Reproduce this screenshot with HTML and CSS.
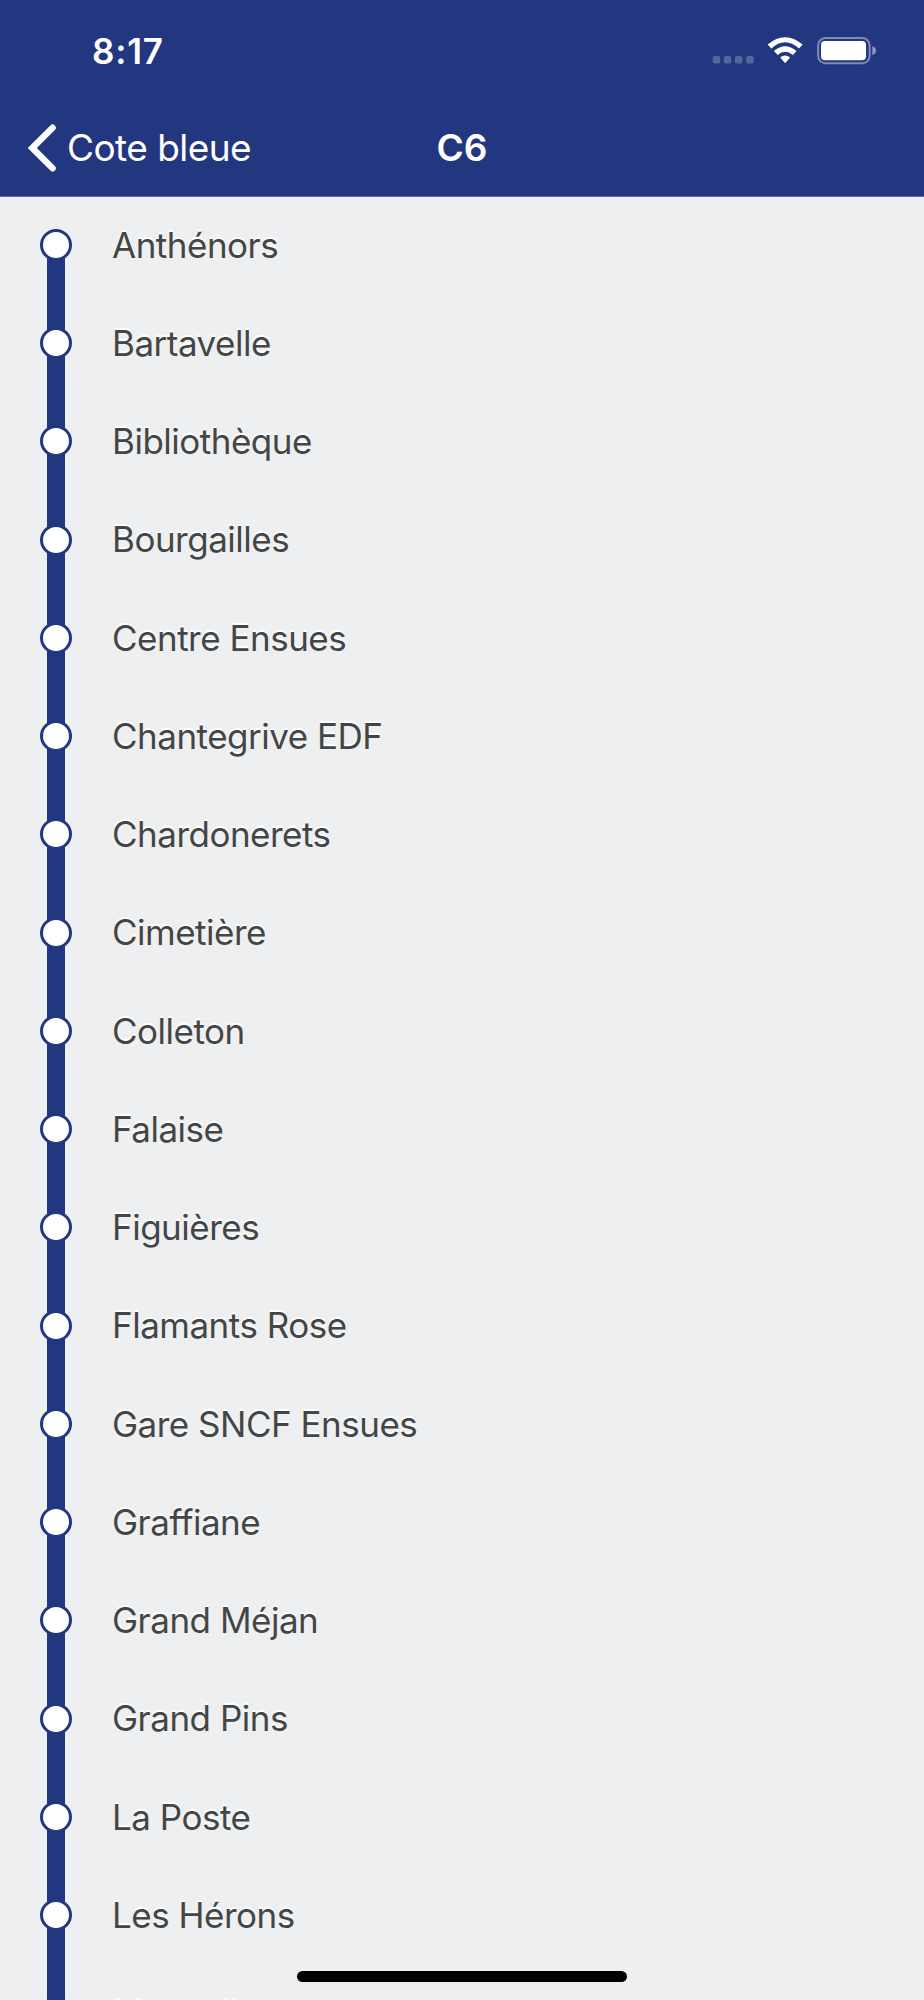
FILE: index.html
```html
<!DOCTYPE html>
<html lang="fr">
<head>
<meta charset="utf-8">
<title>C6</title>
<link rel="stylesheet" href="styles.css">
</head>
<body>
<div class="screen">
  <header class="header">
    <div class="status">
      <span class="time">8:17</span>
      <svg class="status-icons" width="168" height="30" viewBox="0 0 168 30" aria-hidden="true">
        <g fill="#fff" fill-opacity=".23">
          <rect x="0.7" y="19" width="7.5" height="7.6" rx="2"/>
          <rect x="11.8" y="19" width="7.5" height="7.6" rx="2"/>
          <rect x="22.9" y="19" width="7.5" height="7.6" rx="2"/>
          <rect x="34.2" y="19" width="7.5" height="7.6" rx="2"/>
        </g>
        <g fill="#fff">
          <path d="M55.6 7.6Q73 -7.2 90.7 7.6L87 11.5Q73 -.8 59.4 11.5Z"/>
          <path d="M61.9 14.1Q73 4.3 84.6 14.1L80.9 18Q73 11.4 65.7 18Z"/>
          <path d="M68.2 20.6Q73 16.6 78.1 20.6L73.2 26.2Z"/>
        </g>
        <rect x="106.1" y="1" width="51.6" height="25.3" rx="7.5" fill="none" stroke="#fff" stroke-opacity=".42" stroke-width="2"/>
        <rect x="109" y="4" width="45" height="19.2" rx="4" fill="#fff"/>
        <path d="M160.4 9.3Q164 10.6 164 13.6Q164 16.7 160.4 18Z" fill="#fff" fill-opacity=".5"/>
      </svg>
    </div>
    <nav class="nav">
      <a class="back">
        <svg width="28" height="48" viewBox="0 0 28 48" aria-hidden="true"><path d="M24.6 3.7L4.3 24L24.6 44.3" fill="none" stroke="#fff" stroke-width="6.4" stroke-linecap="round"/></svg>
        <span>Cote bleue</span>
      </a>
      <h1 class="title">C6</h1>
    </nav>
  </header>
  <ul class="stops">
    <li class="stop first"><span class="dot"></span><span class="name">Anthénors</span></li>
    <li class="stop"><span class="dot"></span><span class="name">Bartavelle</span></li>
    <li class="stop"><span class="dot"></span><span class="name">Bibliothèque</span></li>
    <li class="stop"><span class="dot"></span><span class="name">Bourgailles</span></li>
    <li class="stop"><span class="dot"></span><span class="name">Centre Ensues</span></li>
    <li class="stop"><span class="dot"></span><span class="name">Chantegrive EDF</span></li>
    <li class="stop"><span class="dot"></span><span class="name">Chardonerets</span></li>
    <li class="stop"><span class="dot"></span><span class="name">Cimetière</span></li>
    <li class="stop"><span class="dot"></span><span class="name">Colleton</span></li>
    <li class="stop"><span class="dot"></span><span class="name">Falaise</span></li>
    <li class="stop"><span class="dot"></span><span class="name">Figuières</span></li>
    <li class="stop"><span class="dot"></span><span class="name">Flamants Rose</span></li>
    <li class="stop"><span class="dot"></span><span class="name">Gare SNCF Ensues</span></li>
    <li class="stop"><span class="dot"></span><span class="name">Graffiane</span></li>
    <li class="stop"><span class="dot"></span><span class="name">Grand Méjan</span></li>
    <li class="stop"><span class="dot"></span><span class="name">Grand Pins</span></li>
    <li class="stop"><span class="dot"></span><span class="name">La Poste</span></li>
    <li class="stop"><span class="dot"></span><span class="name">Les Hérons</span></li>
    <li class="stop"><span class="dot"></span><span class="name">Mouvelle</span></li>
  </ul>
  <div class="home-indicator"></div>
</div>
</body>
</html>
```
FILE: styles.css
```css
* { box-sizing: border-box; }
body { margin: 0; }
.screen {
  position: relative;
  width: 924px;
  height: 2000px;
  overflow: hidden;
  background: #eeeff1;
  font-family: Inter, "Liberation Sans", sans-serif;
}
.header {
  height: 197px;
  background: #233780;
  border-bottom: 1px solid #5d6b9f;
  color: #fff;
}
.status {
  display: flex;
  justify-content: space-between;
  align-items: center;
  height: 99px;
  padding: 2px 44px 0 92px;
}
.status-icons {
  margin-top: 2px;
}
.time {
  font-size: 35px;
  font-weight: 600;
  letter-spacing: 0.8px;
}
.nav {
  display: grid;
  grid-template-columns: 1fr auto 1fr;
  align-items: center;
  height: 97px;
  padding: 0 28px;
}
.back {
  display: flex;
  align-items: center;
  gap: 11px;
  font-size: 37px;
  letter-spacing: -0.55px;
}
.title {
  margin: 0;
  font-size: 37px;
  font-weight: 600;
}
.stops {
  margin: 0;
  padding: 0;
  list-style: none;
}
.stop {
  display: flex;
  align-items: center;
  height: 98.25px;
  padding-left: 40px;
  gap: 40px;
  background: linear-gradient(#233780, #233780) 47px 0 / 18px 100% no-repeat;
}
.first {
  background-position: 47px 48px;
}
.dot {
  width: 32px;
  height: 32px;
  margin-top: -2.5px;
  border: 3px solid #233780;
  border-radius: 50%;
  background: #fff;
}
.name {
  margin-top: -3px;
  font-size: 35px;
  letter-spacing: -0.5px;
  color: #444645;
  text-shadow: 0 -2px 1px #fff;
}
.home-indicator {
  position: absolute;
  left: 297px;
  top: 1971px;
  width: 330px;
  height: 11px;
  border-radius: 6px;
  background: #000;
}
```
